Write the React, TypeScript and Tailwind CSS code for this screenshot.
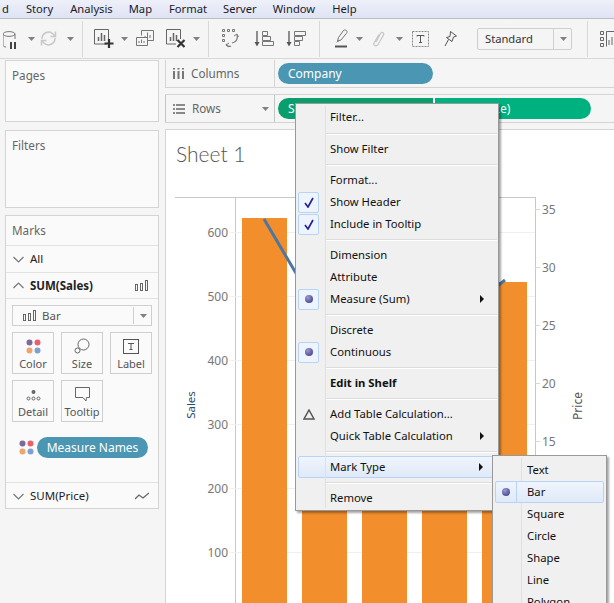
const ui = "font-['Noto_Sans',sans-serif]"

function Caret({ className = "" }: { className?: string }) {
  return (
    <svg width="7" height="4" viewBox="0 0 7 4" className={className}>
      <path d="M0 0h7L3.500 4z" fill="#808080" />
    </svg>
  )
}

function Chevron({ up = false }: { up?: boolean }) {
  return (
    <svg width="11" height="7" viewBox="0 0 11 7" fill="none" stroke="#777" strokeWidth="1.200" className="shrink-0">
      <path d={up ? "M.5 6L5.500 1l5 5" : "M.5 1l5 5 5-5"} />
    </svg>
  )
}

function Sep({ ml }: { ml: string }) {
  return <div className={`h-[36px] w-px bg-[#d8d8d8] ${ml}`} />
}

function BarGlyph() {
  return (
    <svg width="13" height="11" viewBox="0 0 13 11" fill="none" stroke="#666" strokeWidth="1">
      <rect x="0.500" y="4.500" width="2" height="6" />
      <rect x="5.500" y="3.500" width="2" height="7" />
      <rect x="10.500" y="0.500" width="2" height="10" />
    </svg>
  )
}

function Dots({ size = 15 }: { size?: number }) {
  return (
    <svg width={size} height={size} viewBox="0 0 15 15">
      <circle cx="3.500" cy="3.500" r="3" fill="#7b6a9b" />
      <circle cx="11.500" cy="3.500" r="3" fill="#e8616a" />
      <circle cx="3.500" cy="11.500" r="3" fill="#f0a46c" />
      <circle cx="11.500" cy="11.500" r="3" fill="#7f9fcc" />
    </svg>
  )
}

function SortIcon({ bars, className }: { bars: string; className: string }) {
  return (
    <svg width="20" height="16" viewBox="0 0 20 16" fill="none" className={className}>
      <path d="M3 0v12" stroke="#555" strokeWidth="1.300" />
      <path d="M.5 11h5L3 15.500z" fill="#555" />
      <path d={bars} stroke="#777" />
    </svg>
  )
}

function Toolbar() {
  return (
    <div className="flex h-[40px] items-center overflow-hidden border-b border-[#d8d8d8] bg-[#f5f5f5]">
      {/* data source pause */}
      <svg width="15" height="18" viewBox="0 0 15 18" fill="none" className="ml-[3px] mt-[3px]">
        <ellipse cx="6" cy="3" rx="6" ry="2.400" stroke="#777" />
        <path d="M0 3v11c0 1 1 2 3 2M12 3v5" stroke="#777" />
        <path d="M8 11v7M12 11v7" stroke="#444" strokeWidth="2" />
      </svg>
      <Caret className="ml-[10px]" />
      <svg width="17" height="17" viewBox="0 0 17 17" fill="none" stroke="#c8c8c8" strokeWidth="1.500" className="ml-[5px]">
        <path d="M2 9a6.500 6.500 0 0 1 11-5l2 2M15 8a6.500 6.500 0 0 1-11 5l-2-2" />
        <path d="M15.500 1.500v5h-5M1.500 15.500v-5h5" />
      </svg>
      <Caret className="ml-[10px]" />
      <Sep ml="ml-[8px]" />
      {/* new worksheet */}
      <svg width="20" height="20" viewBox="0 0 20 20" fill="none" className="ml-[11px]">
        <path d="M13 15H.5V.5h14V10" stroke="#666" />
        <path d="M4.500 12V8M7.500 12V4M10.500 12V6" stroke="#666" strokeWidth="1.500" />
        <path d="M15 10v9M10.500 14.500h9" stroke="#333" strokeWidth="2.200" />
      </svg>
      <Caret className="ml-[7px]" />
      <svg width="18" height="17" viewBox="0 0 18 17" fill="none" stroke="#777" className="ml-[8px]">
        <path d="M5.500 5.500V.5h12v10H12" />
        <path d="M9 8V6M11.500 8V2.500M14 8V5" />
        <path d="M.5 7.500h11v8H.5z" />
        <path d="M3 13v-2M5.500 13V9.500M8 13v-2" />
      </svg>
      {/* clear sheet */}
      <svg width="20" height="20" viewBox="0 0 20 20" fill="none" className="ml-[12px]">
        <path d="M10 15H.5V.5h14V10" stroke="#666" />
        <path d="M4.500 12V8M7.500 12V4M10.500 12V6" stroke="#666" strokeWidth="1.500" />
        <path d="M11.500 11l7 7M18.500 11l-7 7" stroke="#333" strokeWidth="2.200" />
      </svg>
      <Caret className="ml-[7px]" />
      <Sep ml="ml-[8px]" />
      {/* swap */}
      <svg width="17" height="19" viewBox="0 0 17 19" fill="none" stroke="#777" className="ml-[13px]">
        <path d="M.5.500h2v2h-2zM5.500.500h2v2h-2zM10.500.500h2v2h-2zM.5 5.500h2v2h-2zM.5 10.500h2v2h-2z" />
        <path d="M15 6c1 4-1 7-5 8M4 15c1 2 3 3 5 2" strokeWidth="1.200" />
        <path d="M12 7l3-2 1.500 3M7 18l-3-2 3-2" strokeWidth="1" />
      </svg>
      {/* sort ascending */}
      <SortIcon bars="M8.500.500h5v4h-5zM8.500 5.500h8v4h-8zM8.500 10.500h11v4h-11z" className="ml-[15px]" />
      {/* sort descending */}
      <SortIcon bars="M8.500.500h11v4h-11zM8.500 5.500h8v4h-8zM8.500 10.500h5v4h-5z" className="ml-[12px]" />
      <Sep ml="ml-[13px]" />
      {/* highlight */}
      <svg width="13" height="19" viewBox="0 0 13 19" fill="none" className="ml-[15px]">
        <path d="M2.500 12l1-3.500L8.500 1.500c1-1 3-.5 3.500 1 .2 .7 0 1-.5 1.700L6 11z" stroke="#777" />
        <path d="M1 14l1.500-2L6 11z" fill="#777" />
        <path d="M0 17.500h12" stroke="#555" strokeWidth="2" />
      </svg>
      <Caret className="ml-[8px]" />
      {/* attachment */}
      <svg width="13" height="16" viewBox="0 0 13 16" fill="none" stroke="#c8c8c8" strokeWidth="1.300" className="ml-[9px]">
        <path d="M4 11L8.500 2.500C9.500.5 12.500 1.500 11.500 4L6 13.500C4.500 16 1 14.500 2 12L7 3.500" />
      </svg>
      <Caret className="ml-[11px]" />
      <svg width="17" height="16" viewBox="0 0 17 16" fill="none" className="ml-[9px]">
        <rect x="0.500" y="0.500" width="16" height="15" stroke="#888" strokeDasharray="2 1" />
        <path d="M5 4.500h7M8.500 4.500v7M7 11.500h3M5 4.500v1M12 4.500v1" stroke="#555" />
      </svg>
      {/* pin */}
      <svg width="13" height="16" viewBox="0 0 13 16" fill="none" stroke="#555" className="ml-[15px]">
        <path d="M6.500.5l6 4.500-3 1L8 10.500 2.500 6.500 6 5.500zM4.500 8.500L1 15" />
      </svg>
      <div className="ml-[20px] flex h-[22px] w-[95px] items-center rounded-[2px] border border-[#cfcfcf]">
        <span className="w-[76px] border-r border-[#cfcfcf] pl-[7px] text-[11.200px] leading-[20px] text-[#333]">Standard</span>
        <Caret className="ml-[6px]" />
      </div>
      <Sep ml="ml-[15px]" />
      <svg width="14" height="16" viewBox="0 0 14 16" fill="none" stroke="#666" className="ml-[12px] shrink-0">
        <path d="M.5.500h3v3h-3zM.5 6.500h3v3h-3zM.5 12.500h3v3h-3zM6.500 15.500V.500h9M9 14V9M12 14V6" />
      </svg>
    </div>
  )
}

function Panel({ title, className }: { title: string; className: string }) {
  return (
    <div className={`border border-[#d4d4d4] bg-[#fafafa] ${className}`}>
      <div className="pl-[6px] pt-[6px] text-[11.700px] text-[#666]">{title}</div>
    </div>
  )
}

function MarkButton({ label, icon }: { label: string; icon: React.ReactNode }) {
  return (
    <div className="flex h-[42px] w-[42px] flex-col items-center border border-[#cfcfcf] text-[#555]">
      <div className="flex h-[21px] items-end">{icon}</div>
      <span className="mt-[2px] text-[11px] leading-[16px]">{label}</span>
    </div>
  )
}

function Sidebar() {
  return (
    <div className="flex w-[165px] shrink-0 flex-col pl-[5px] pr-[6px] pt-px">
      <Panel title="Pages" className="h-[62px]" />
      <Panel title="Filters" className="mt-[8px] h-[78px]" />
      <div className="mt-[7px] h-[294px] border border-[#d4d4d4] bg-[#fafafa] text-[11.500px]">
        <div className="flex h-[30px] items-center border-b border-[#e2e2e2] pl-[6px] text-[11.700px] text-[#666]">Marks</div>
        <div className="flex h-[27px] items-center gap-[6px] border-b border-[#e2e2e2] pl-[7px] text-[#222]">
          <Chevron />
          All
        </div>
        <div className="flex h-[26px] items-center border-b border-[#e2e2e2] pl-[7px] pr-[10px] font-bold text-[#222]">
          <Chevron up />
          <span className="ml-[6px] flex-1">SUM(Sales)</span>
          <BarGlyph />
        </div>
        <div className="mx-[6px] mt-[6px] flex h-[21px] items-center border border-[#cfcfcf] text-[#555]">
          <div className="flex w-[121px] items-center gap-[6px] border-r border-[#cfcfcf] pl-[10px]">
            <BarGlyph />
            Bar
          </div>
          <Caret className="ml-[6px]" />
        </div>
        <div className="mx-[6px] mt-[6px] flex gap-[7px]">
          <MarkButton label="Color" icon={<Dots />} />
          <MarkButton
            label="Size"
            icon={
              <svg width="16" height="16" viewBox="0 0 16 16" fill="none" stroke="#666">
                <circle cx="9.500" cy="6.500" r="5.500" />
                <circle cx="3.500" cy="12.500" r="2.500" fill="#fafafa" />
              </svg>
            }
          />
          <MarkButton
            label="Label"
            icon={
              <svg width="16" height="15" viewBox="0 0 16 15" fill="none" stroke="#555">
                <rect x="0.500" y="0.500" width="15" height="14" />
                <path d="M5 4.500h6M8 4.500v6M6.500 10.500h3" />
              </svg>
            }
          />
        </div>
        <div className="mx-[6px] mt-[6px] flex gap-[7px]">
          <MarkButton
            label="Detail"
            icon={
              <svg width="15" height="13" viewBox="0 0 15 13" fill="none" stroke="#666">
                <circle cx="7.500" cy="3" r="2" fill="#666" stroke="none" />
                <circle cx="2.500" cy="9.500" r="1.500" />
                <circle cx="7.500" cy="9.500" r="1.500" />
                <circle cx="12.500" cy="9.500" r="1.500" />
              </svg>
            }
          />
          <MarkButton
            label="Tooltip"
            icon={
              <svg width="15" height="15" viewBox="0 0 15 15" fill="none" stroke="#666">
                <path d="M.5.500h14v10h-3l-.5 3.500-3-3.500H.5z" />
              </svg>
            }
          />
        </div>
        <div className="ml-[13px] mt-[15px] flex h-[21px] items-center gap-[3px]">
          <Dots />
          <div className="flex h-[21px] w-[111px] items-center justify-center rounded-full bg-[#4a96b3] text-[12px] text-white">
            Measure Names
          </div>
        </div>
        <div className="mt-[24px] flex h-[27px] items-center border-t border-[#e2e2e2] pl-[7px] pr-[9px] text-[#222]">
          <Chevron />
          <span className="ml-[6px] flex-1">SUM(Price)</span>
          <svg width="14" height="8" viewBox="0 0 14 8" fill="none" stroke="#666" strokeWidth="1.300">
            <path d="M0 7l4-4 4 3 6-5" />
          </svg>
        </div>
      </div>
    </div>
  )
}

function Chart() {
  const left = [
    { y: 232, t: "600" },
    { y: 296, t: "500" },
    { y: 360, t: "400" },
    { y: 424, t: "300" },
    { y: 488, t: "200" },
    { y: 552, t: "100" },
  ]
  const right = [
    { y: 209, t: "35" },
    { y: 267, t: "30" },
    { y: 325, t: "25" },
    { y: 383, t: "20" },
    { y: 441, t: "15" },
  ]
  const bars = [
    { x: 242, top: 218 },
    { x: 302, top: 270 },
    { x: 362, top: 270 },
    { x: 422, top: 270 },
    { x: 482, top: 282 },
  ]
  return (
    <svg viewBox="166 190 448 413" className="h-[413px] w-[448px] shrink-0" fontFamily="'Noto Sans',sans-serif">
      <path d="M175 197.500H535M235.500 197V603M535.500 197V603" stroke="#c8c8c8" />
      {left.map((l) => (
        <g key={l.t}>
          <path d={`M230 ${l.y + 0.5}H535`} stroke="#f0f0f0" />
          <text x="228" y={l.y + 5} textAnchor="end" fontSize="12" fill="#777">{l.t}</text>
        </g>
      ))}
      {right.map((r) => (
        <g key={r.t}>
          <path d={`M535 ${r.y + 0.5}h5`} stroke="#d8d8d8" />
          <text x="542" y={r.y + 5} fontSize="12" fill="#777">{r.t}</text>
        </g>
      ))}
      {bars.map((b) => (
        <rect key={b.x} x={b.x} y={b.top} width="45" height={603 - b.top} fill="#f28e2b" />
      ))}
      <path d="M264 219L300 280M480 300L505 280" stroke="#4f76a0" strokeWidth="3" fill="none" />
      <text transform="translate(195 405) rotate(-90)" textAnchor="middle" fontSize="11.500" fill="#2d4a6e">Sales</text>
      <text transform="translate(582 406) rotate(-90)" textAnchor="middle" fontSize="12" fill="#555">Price</text>
    </svg>
  )
}

function Check() {
  return (
    <svg width="10" height="11" viewBox="0 0 10 11" fill="none">
      <path d="M1 6l3 4 5-9" stroke="#23239a" strokeWidth="1.700" />
    </svg>
  )
}

function Radio() {
  return <div className="h-[8px] w-[8px] rounded-full bg-[radial-gradient(circle_at_35%_30%,#9a9ad0,#33337f)]" />
}

function Delta() {
  return (
    <svg width="12" height="11" viewBox="0 0 12 11" fill="none">
      <path d="M6 1l5 9H1z" stroke="#555" strokeWidth="1.500" />
    </svg>
  )
}

type Item = {
  label?: string
  mark?: "check" | "radio" | "delta"
  arrow?: boolean
  bold?: boolean
  active?: boolean
  tall?: boolean
}

const mainItems: Item[] = [
  { label: "Filter..." },
  { tall: true },
  { label: "Show Filter" },
  {},
  { label: "Format..." },
  { label: "Show Header", mark: "check" },
  { label: "Include in Tooltip", mark: "check" },
  {},
  { label: "Dimension" },
  { label: "Attribute" },
  { label: "Measure (Sum)", mark: "radio", arrow: true },
  {},
  { label: "Discrete" },
  { label: "Continuous", mark: "radio" },
  {},
  { label: "Edit in Shelf", bold: true },
  {},
  { label: "Add Table Calculation...", mark: "delta" },
  { label: "Quick Table Calculation", arrow: true },
  {},
  { label: "Mark Type", arrow: true, active: true },
  {},
  { label: "Remove" },
]

function MenuRow({ item }: { item: Item }) {
  if (!item.label) {
    return (
      <div
        className={`ml-[30px] mr-px mb-[3px] h-[2px] border-b border-t border-b-white border-t-[#dcdcdc] ${
          item.tall ? "mt-[5px]" : "mt-[4px]"
        }`}
      />
    )
  }
  return (
    <div
      className={`mx-[2px] flex h-[22px] items-center text-[11.300px] text-[#111] ${
        item.active ? "rounded-[2px] border border-[#b8d3f5] bg-[linear-gradient(#f0f5fc,#dfe9f8)]" : ""
      } ${item.bold ? "font-bold" : ""}`}
    >
      <div
        className={`flex h-[21px] w-[21px] shrink-0 items-center justify-center rounded-[2px] ${
          item.mark === "check" || item.mark === "radio" ? "border border-[#b8d3f5] bg-[#eef4fc]" : ""
        }`}
      >
        {item.mark === "check" && <Check />}
        {item.mark === "radio" && <Radio />}
        {item.mark === "delta" && <Delta />}
      </div>
      <span className={`flex-1 ${item.active ? "ml-[10px]" : "ml-[11px]"}`}>{item.label}</span>
      {item.arrow && (
        <svg width="4" height="8" viewBox="0 0 4 8" className="mr-[12px]">
          <path d="M0 0l4 4-4 4z" fill="#111" />
        </svg>
      )}
    </div>
  )
}

function ContextMenu() {
  return (
    <div className="absolute left-[295px] top-[103px] w-[204px] border border-[#999] bg-[#f0f0f0] pb-px pt-[2px] shadow-[2px_2px_2px_rgba(0,0,0,0.35)]">
      <div className="absolute bottom-[2px] left-[29px] top-[2px] w-px bg-[#e0e0e0]" />
      {mainItems.map((it, i) => (
        <MenuRow key={i} item={it} />
      ))}
    </div>
  )
}

function SubMenu() {
  const items = ["Text", "Bar", "Square", "Circle", "Shape", "Line", "Polygon"]
  return (
    <div className="absolute left-[492px] top-[455px] w-[115px] border border-[#999] bg-[#f0f0f0] pt-[3px] shadow-[2px_2px_2px_rgba(0,0,0,0.35)]">
      <div className="absolute bottom-0 left-[28px] top-[2px] w-px bg-[#e0e0e0]" />
      {items.map((t) =>
        t === "Bar" ? (
          <div
            key={t}
            className="relative mx-[2px] flex h-[22px] items-center rounded-[2px] border border-[#b8d3f5] bg-[linear-gradient(#f0f5fc,#dfe9f8)] text-[11.300px] text-[#111]"
          >
            <div className="flex h-[20px] w-[21px] items-center justify-center border-r border-[#b8d3f5]">
              <Radio />
            </div>
            <span className="ml-[10px]">{t}</span>
          </div>
        ) : (
          <div key={t} className="relative flex h-[22px] items-center pl-[34px] text-[11.300px] text-[#111]">
            {t}
          </div>
        ),
      )}
    </div>
  )
}

export default function App() {
  return (
    <div className={`relative h-[603px] w-[614px] overflow-hidden bg-[#f5f5f5] ${ui}`}>
      {/* Menu bar */}
      <div className="flex h-[19px] items-center overflow-hidden border-b border-[#b9bccb] bg-[linear-gradient(#eef0f9,#dfe3f3)] text-[11.200px] text-[#1a1a2a]">
        <span className="ml-[2px]">d</span>
        <span className="ml-[17px]">Story</span>
        <span className="ml-[17px]">Analysis</span>
        <span className="ml-[16px]">Map</span>
        <span className="ml-[17px]">Format</span>
        <span className="ml-[16px]">Server</span>
        <span className="ml-[16px]">Window</span>
        <span className="ml-[17px]">Help</span>
      </div>

      <Toolbar />

      <div className="flex">
        <Sidebar />
        <div className="flex min-w-0 flex-1 flex-col pt-px">
          {/* Shelves */}
          <div className="flex h-[28px] items-center border-b border-[#d4d4d4]">
            <div className="flex h-full w-[110px] items-center border-r border-l border-[#d4d4d4] pl-[7px] text-[11.700px] text-[#666]">
              <svg width="11" height="11" viewBox="0 0 11 11" className="mr-[7px]">
                <path d="M1 3v8M5.500 3v8M10 3v8" stroke="#777" strokeWidth="2" />
                <path d="M1 0v1.500M5.500 0v1.500M10 0v1.500" stroke="#777" strokeWidth="2" />
              </svg>
              Columns
            </div>
            <div className="ml-[3px] flex h-[21px] w-[155px] items-center rounded-full bg-[#4a96b3] pl-[10px] text-[12px] text-white">
              Company
            </div>
          </div>
          <div className="mt-[6px] flex h-[29px] items-center border-b border-t border-[#d4d4d4]">
            <div className="flex h-full w-[110px] items-center border-r border-l border-[#c4c4c4] pl-[7px] text-[11.700px] text-[#666]">
              <svg width="12" height="10" viewBox="0 0 12 10" className="mr-[7px]">
                <path d="M0 1h2M3 1h9M0 5h2M3 5h9M0 9h2M3 9h9" stroke="#666" strokeWidth="1.500" />
              </svg>
              <span className="flex-1">Rows</span>
              <Caret className="mr-[5px]" />
            </div>
            <div className="ml-[3px] flex h-[21px] w-[155px] items-center rounded-l-full bg-[#0a9d6e] pl-[10px] pt-px text-[12px] text-white">
              SUM(Sales)
            </div>
            <div className="ml-[2px] flex h-[21px] w-[156px] items-center rounded-r-full bg-[#00b180] pl-[14px] pt-px text-[12px] text-white">
              SUM(Price)
            </div>
          </div>
          {/* Sheet */}
          <div className="mt-[6px] h-[474px] border-l border-t border-[#d4d4d4] bg-white">
            <div className="h-[60px] pl-[10px] pt-[11px] font-['Lato',sans-serif] text-[21px] font-light leading-[26px] text-[#555]">
              Sheet 1
            </div>
            <Chart />
          </div>
        </div>
      </div>

      <ContextMenu />
      <SubMenu />
    </div>
  )
}
